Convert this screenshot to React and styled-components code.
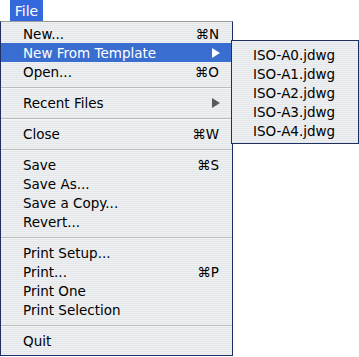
import React from 'react';
import styled, { createGlobalStyle } from 'styled-components';

const GlobalStyle = createGlobalStyle`
  html, body {
    margin: 0;
    padding: 0;
    background: #ffffff;
  }
`;

const Screen = styled.div`
  width: 359px;
  height: 357px;
  overflow: hidden;
  font-family: "DejaVu Sans", "Lucida Grande", sans-serif;
  font-size: 13.5px;
  color: #000;
  background: #fff;
`;

const MenuBar = styled.div`
  display: flex;
  height: 21px;
  padding-left: 10px;
`;

const MenuTitle = styled.div`
  display: flex;
  align-items: center;
  width: 33px;
  justify-content: center;
  background: #3369dc;
  color: #fff;
  font-size: 14px;
`;

const stripes = `
  background: repeating-linear-gradient(
    to bottom,
    #eef0f2 0px,
    #eef0f2 1px,
    #e4e7ea 1px,
    #e4e7ea 2px
  );
`;

const Dropdown = styled.div`
  position: relative;
  width: 231px;
  border: 1px solid #1d2f63;
  border-top-color: #9b9b9b;
  padding: 2px 0 5px;
  ${stripes}
`;

const Item = styled.div`
  position: relative;
  display: flex;
  align-items: center;
  height: 19px;
  padding: 0 13px 0 22px;
  background: ${p => (p.$active ? '#3a6dd0' : 'transparent')};
  color: ${p => (p.$active ? '#fff' : '#000')};
`;

const Label = styled.span`
  flex: 1;
  white-space: nowrap;
`;

const Shortcut = styled.span`
  white-space: nowrap;
`;

const Arrow = styled.span`
  width: 0;
  height: 0;
  margin-right: -1px;
  border-top: 5px solid transparent;
  border-bottom: 5px solid transparent;
  border-left: 8px solid ${p => (p.$active ? '#fff' : '#5a5a5a')};
`;

const Separator = styled.div`
  height: 12px;
  display: flex;
  align-items: center;
  &::before {
    content: '';
    display: block;
    width: 100%;
    height: 1px;
    background: #b9bbbd;
    box-shadow: 0 1px 0 #f7f7f7;
  }
`;

const Submenu = styled.div`
  position: absolute;
  left: 230px;
  top: -3px;
  width: 126px;
  border: 1px solid #1d2f63;
  padding: 4px 0 3px;
  color: #000;
  ${stripes}
`;

const SubItem = styled.div`
  display: flex;
  align-items: center;
  height: 19px;
  padding-left: 21px;
  white-space: nowrap;
`;

const groups = [
  [
    { label: 'New...', key: '⌘N' },
    { label: 'New From Template', sub: true, active: true },
    { label: 'Open...', key: '⌘O' },
  ],
  [{ label: 'Recent Files', sub: true }],
  [{ label: 'Close', key: '⌘W' }],
  [
    { label: 'Save', key: '⌘S' },
    { label: 'Save As...' },
    { label: 'Save a Copy...' },
    { label: 'Revert...' },
  ],
  [
    { label: 'Print Setup...' },
    { label: 'Print...', key: '⌘P' },
    { label: 'Print One' },
    { label: 'Print Selection' },
  ],
  [{ label: 'Quit' }],
];

const templates = ['ISO-A0.jdwg', 'ISO-A1.jdwg', 'ISO-A2.jdwg', 'ISO-A3.jdwg', 'ISO-A4.jdwg'];

const App = () => (
  <Screen>
    <GlobalStyle />
    <MenuBar>
      <MenuTitle>File</MenuTitle>
    </MenuBar>
    <Dropdown>
      {groups.map((group, gi) => (
        <React.Fragment key={gi}>
          {gi > 0 && <Separator />}
          {group.map(item => (
            <Item key={item.label} $active={item.active}>
              <Label>{item.label}</Label>
              {item.key && <Shortcut>{item.key}</Shortcut>}
              {item.sub && <Arrow $active={item.active} />}
              {item.active && (
                <Submenu>
                  {templates.map(t => (
                    <SubItem key={t}>{t}</SubItem>
                  ))}
                </Submenu>
              )}
            </Item>
          ))}
        </React.Fragment>
      ))}
    </Dropdown>
  </Screen>
);

export default App;
